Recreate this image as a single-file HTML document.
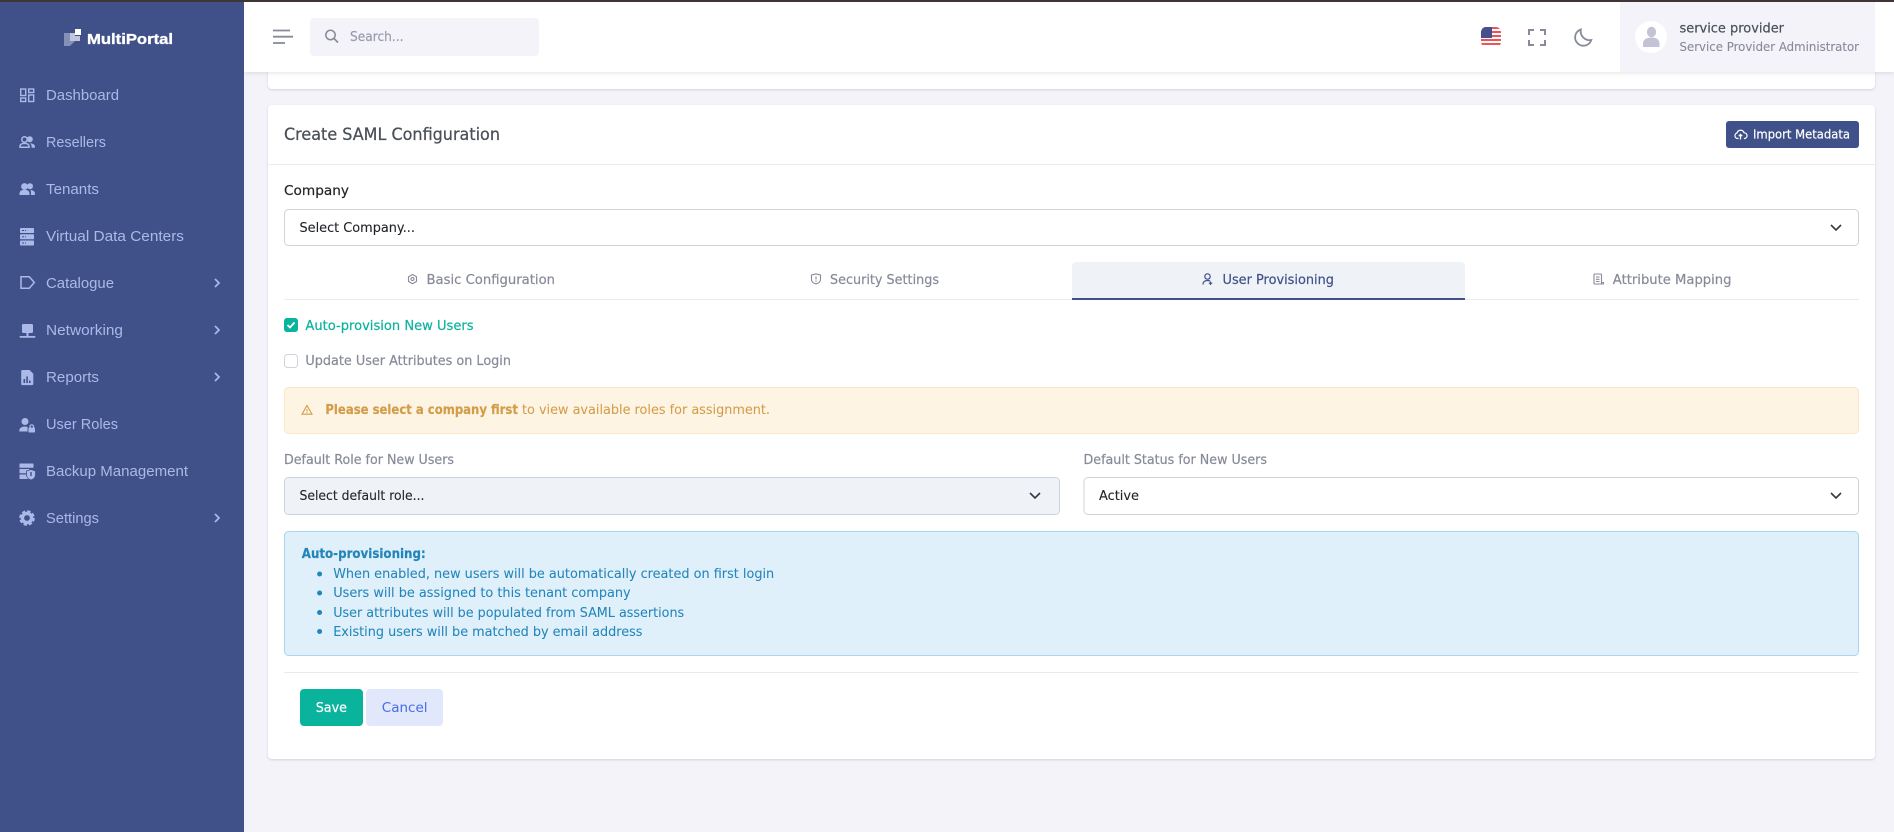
<!DOCTYPE html>
<html lang="en">
<head>
<meta charset="utf-8">
<title>Create SAML Configuration</title>
<style>
html,body{margin:0;padding:0;width:1894px;height:832px;overflow:hidden;background:#f3f3f9}
svg{display:block}
text{font-family:"DejaVu Sans","Liberation Sans",sans-serif;font-size:13px;white-space:pre;stroke-width:.2px}
.nav{font-family:"Liberation Sans",sans-serif;font-size:15px;fill:#abb9e8;stroke-width:0}
.ic{fill:#abb9e8}
.ol{fill:none;stroke:#abb9e8;stroke-width:1.5}
.g{fill:#878a99;stroke:#878a99}
.d{fill:#212529;stroke:#212529}
.h{fill:#495057;stroke:#495057}
.p{fill:#405189;stroke:#405189}
.t{fill:#0ab39c;stroke:#0ab39c}
.w{fill:#fff;stroke:#fff}
.y{fill:#d29d48;stroke:#d29d48}
.b{fill:#2385ba;stroke:#2385ba}
.m{fill:#9a9cab;stroke:#9a9cab}
.u{fill:#4b6fe6;stroke:#4b6fe6}
</style>
</head>
<body>
<svg xmlns="http://www.w3.org/2000/svg" width="1894" height="832" viewBox="0 0 1894 832">
<defs>
<clipPath id="fc"><rect x="1481" y="27" width="20" height="20" rx="5"/></clipPath>
</defs>
<rect width="1894" height="832" fill="#f3f3f9"/>

<!-- cards -->
<rect x="268" y="40" width="1607" height="49" rx="4" fill="#fff" style="filter:drop-shadow(0 1px 1px rgba(56,65,74,.18))"/>
<rect x="268" y="105" width="1607" height="654" rx="4" fill="#fff" style="filter:drop-shadow(0 1px 1px rgba(56,65,74,.18))"/>

<!-- header -->
<rect x="244" y="2" width="1650" height="70" fill="#fff" style="filter:drop-shadow(0 1px 2px rgba(56,65,74,.15))"/>
<rect x="1620" y="2" width="255" height="70" fill="#f3f3f9"/>
<rect width="1894" height="2" fill="#3f3536"/>

<!-- sidebar -->
<rect y="2" width="244" height="830" fill="#405189"/>
<path fill="#8590b8" d="M64 33h6v8h5l-5 5h-6z"/>
<path fill="#c0c6dc" d="M70 33h5v-0h0v3h5v5h-10z"/>
<rect x="75" y="29" width="6" height="6" fill="#fff"/>
<text x="87" y="44" textLength="86" lengthAdjust="spacingAndGlyphs" style="font-family:'Liberation Sans',sans-serif;font-size:15px;font-weight:700;stroke-width:.35px" class="w">MultiPortal</text>

<!-- nav -->
<text class="nav" x="46" y="100" textLength="73" lengthAdjust="spacingAndGlyphs">Dashboard</text>
<text class="nav" x="46" y="147" textLength="60" lengthAdjust="spacingAndGlyphs">Resellers</text>
<text class="nav" x="46" y="194" textLength="53" lengthAdjust="spacingAndGlyphs">Tenants</text>
<text class="nav" x="46" y="241" textLength="138" lengthAdjust="spacingAndGlyphs">Virtual Data Centers</text>
<text class="nav" x="46" y="288" textLength="68" lengthAdjust="spacingAndGlyphs">Catalogue</text>
<text class="nav" x="46" y="335" textLength="77" lengthAdjust="spacingAndGlyphs">Networking</text>
<text class="nav" x="46" y="382" textLength="53" lengthAdjust="spacingAndGlyphs">Reports</text>
<text class="nav" x="46" y="429" textLength="72" lengthAdjust="spacingAndGlyphs">User Roles</text>
<text class="nav" x="46" y="476" textLength="142" lengthAdjust="spacingAndGlyphs">Backup Management</text>
<text class="nav" x="46" y="523" textLength="53" lengthAdjust="spacingAndGlyphs">Settings</text>

<!-- nav icons -->
<g class="ol" style="stroke-width:1.4">
<rect x="20.700" y="89" width="5" height="6.500"/><rect x="28.700" y="89" width="5" height="3.500"/>
<rect x="20.700" y="98" width="5" height="3.500"/><rect x="28.700" y="95" width="5" height="6.500"/>
</g>
<!-- resellers -->
<circle cx="24.500" cy="139.500" r="2.700" class="ol"/>
<path class="ol" d="M20 147.200v-.9c0-1.900 2-2.900 4.500-2.900s4.500 1 4.500 2.900v.9z"/>
<circle cx="29.800" cy="139.300" r="3" class="ic"/>
<path class="ic" d="M30 143.300c2.700.2 4.900 1.300 4.900 3v1.500h-3.300v-1.500c0-1.100-.6-2.100-1.600-3z"/>
<!-- tenants -->
<circle cx="24.500" cy="186.500" r="3.400" class="ic"/>
<circle cx="30" cy="186.300" r="3" class="ic"/>
<path class="ic" d="M19.500 195v-1.700c0-2.300 2.300-3.500 5-3.500s5 1.200 5 3.500v1.700z"/>
<path class="ic" d="M30.500 190c2.400.2 4.400 1.300 4.400 3.100V195h-3.900v-1.800c0-1.200-.1-2.300-.5-3.200z"/>
<!-- server -->
<rect x="20" y="228" width="14" height="5" rx=".8" class="ic"/><rect x="20" y="234.300" width="14" height="5" rx=".8" class="ic"/><rect x="20" y="240.500" width="14" height="5" rx=".8" class="ic"/>
<g fill="#405189"><rect x="22" y="230" width="2" height="1"/><rect x="25" y="230" width="1" height="1"/><rect x="22" y="236.300" width="2" height="1"/><rect x="25" y="236.300" width="1" height="1"/><rect x="22" y="242.500" width="2" height="1"/><rect x="25" y="242.500" width="1" height="1"/></g>
<!-- catalogue -->
<path class="ol" d="M21 276.800h8.300l5 5.700-5 5.700H21z"/>
<!-- networking -->
<rect x="22" y="324" width="11" height="9" rx="1.200" class="ic"/>
<rect x="26.500" y="333" width="2" height="3.500" class="ic"/>
<rect x="19.500" y="336" width="16" height="1.800" rx=".9" class="ic"/>
<!-- reports -->
<path class="ic" d="M22.500 370h7l3.800 3.800v10a1.300 1.300 0 0 1-1.300 1.300h-9.500a1.300 1.300 0 0 1-1.300-1.300v-12.500a1.300 1.300 0 0 1 1.300-1.300z"/>
<g fill="#405189"><rect x="23.500" y="379" width="1.600" height="4"/><rect x="26.300" y="376.500" width="1.600" height="6.500"/><rect x="29" y="380.500" width="1.600" height="2.500"/></g>
<!-- user roles -->
<circle cx="25" cy="421.500" r="3.500" class="ic"/>
<path class="ic" d="M19.300 431.500v-1c0-2.400 2.500-4 5.500-4 1 0 2 .2 2.800.5v4.500z"/>
<rect x="28.500" y="427.500" width="6.500" height="5" rx=".8" class="ic"/>
<path class="ol" style="stroke-width:1.200" d="M30 427.500v-1.300a1.800 1.800 0 0 1 3.500 0v1.300"/>
<!-- backup -->
<rect x="19.500" y="463.500" width="14" height="4.300" rx=".6" class="ic"/>
<rect x="19.500" y="469" width="10" height="4.300" rx=".6" class="ic"/>
<rect x="19.500" y="474.500" width="9" height="4.500" rx=".6" class="ic"/>
<path class="ic" d="M31 469.500l4.500 1.500v3.800c0 2.600-2 4.500-4.500 5.200-2.500-.7-4.500-2.600-4.500-5.200V471z" stroke="#405189" stroke-width=".8"/>
<rect x="30.300" y="472" width="1.400" height="4" fill="#405189"/>
<!-- settings -->
<circle cx="27" cy="518" r="4.600" fill="none" stroke="#abb9e8" stroke-width="3.400"/>
<circle cx="27" cy="518" r="6.900" fill="none" stroke="#abb9e8" stroke-width="1.800" stroke-dasharray="3.400 2.020"/>
<!-- chevrons -->
<g fill="none" stroke="#abb9e8" stroke-width="1.700">
<polyline points="215,279 219,283 215,287"/>
<polyline points="215,326 219,330 215,334"/>
<polyline points="215,373 219,377 215,381"/>
<polyline points="215,514 219,518 215,522"/>
</g>

<!-- hamburger -->
<g stroke="#878a99" stroke-width="1.800">
<line x1="273" x2="290" y1="30.500" y2="30.500"/>
<line x1="273" x2="293" y1="36.700" y2="36.700"/>
<line x1="273" x2="285" y1="43" y2="43"/>
</g>
<!-- search -->
<rect x="310" y="18" width="229" height="38" rx="4" fill="#f3f3f9"/>
<circle cx="330.500" cy="35" r="4.700" fill="none" stroke="#878a99" stroke-width="1.500"/>
<line x1="334" y1="38.500" x2="338" y2="42.500" stroke="#878a99" stroke-width="1.700"/>
<text x="350" y="41" textLength="53.500" lengthAdjust="spacingAndGlyphs" class="m">Search...</text>

<!-- flag -->
<g clip-path="url(#fc)">
<rect x="1481" y="27" width="20" height="20" fill="#fff"/>
<g fill="#f0525a">
<rect x="1481" y="27" width="20" height="2"/><rect x="1481" y="31" width="20" height="2"/><rect x="1481" y="35" width="20" height="2"/><rect x="1481" y="39" width="20" height="2"/><rect x="1481" y="43" width="20" height="2"/>
</g>
<rect x="1481" y="27" width="11" height="11" fill="#46508f"/>
</g>
<!-- fullscreen -->
<path fill="none" stroke="#878a99" stroke-width="2" d="M1529 35v-5h5M1540 30h5v5M1545 40v5h-5M1534 45h-5v-5"/>
<!-- moon -->
<path fill="none" stroke="#878a99" stroke-width="1.800" d="M1580.800 29.500A8.300 8.300 0 1 0 1591.300 40A9 9 0 0 1 1580.800 29.500Z"/>

<!-- user -->
<circle cx="1651" cy="37" r="16" fill="#fff"/>
<ellipse cx="1651.500" cy="32" rx="4.600" ry="5.200" fill="#c3c2d6"/>
<path fill="#c3c2d6" d="M1643 47v-3.500c0-4 3.500-6 8.500-6s8 2 8 6V47z"/>
<text x="1679.500" y="32.500" textLength="104.500" lengthAdjust="spacingAndGlyphs" class="h" style="font-size:13.500px">service provider</text>
<text x="1679.500" y="51" textLength="179.500" lengthAdjust="spacingAndGlyphs" class="g" style="font-size:12.500px;stroke-width:.1px">Service Provider Administrator</text>

<!-- card header -->
<text x="284" y="140" textLength="216" lengthAdjust="spacingAndGlyphs" class="h" style="font-size:16.500px;stroke-width:.25px">Create SAML Configuration</text>
<line x1="268" x2="1875" y1="164.500" y2="164.500" stroke="#e9ebec"/>
<rect x="1726" y="121" width="133" height="27" rx="3" fill="#405189"/>
<path fill="none" stroke="#fff" stroke-width="1.200" d="M1738.500 138.500h-.8a2.800 2.800 0 0 1-.7-5.500 3.700 3.700 0 0 1 7.100-.2 2.900 2.900 0 0 1 .8 5.700h-1"/>
<path fill="none" stroke="#fff" stroke-width="1.200" d="M1740.500 139.500v-5M1738.700 136.200l1.800-1.800 1.800 1.800"/>
<text x="1753" y="138.500" textLength="97" lengthAdjust="spacingAndGlyphs" class="w" style="font-size:12px">Import Metadata</text>

<!-- company -->
<text x="284" y="195" textLength="65" lengthAdjust="spacingAndGlyphs" class="d">Company</text>
<rect x="284.500" y="209.500" width="1574" height="36" rx="4" fill="#fff" stroke="#ced4da"/>
<text x="299.500" y="232" textLength="115.500" lengthAdjust="spacingAndGlyphs" class="d" style="stroke-width:.1px">Select Company...</text>
<polyline points="1831,225 1836,230 1841,225" fill="none" stroke="#343a40" stroke-width="1.600"/>

<!-- tabs -->
<line x1="284" x2="1859" y1="299.500" y2="299.500" stroke="#e9ebec"/>
<path d="M1072 266a4 4 0 0 1 4-4h385a4 4 0 0 1 4 4v34h-393z" fill="#eff2f7"/>
<rect x="1072" y="298" width="393" height="2" fill="#405189"/>

<g fill="none" stroke="#878a99" stroke-width="1.100">
<path d="M412.500 274.500l4 2.300v4.600l-4 2.300-4-2.300v-4.600z"/><circle cx="412.500" cy="279" r="1.500"/>
<path d="M811.500 275l4.500-1 4.500 1v4.500c0 2.300-2 3.800-4.500 4.500-2.500-.7-4.500-2.200-4.500-4.500z"/><path d="M816 276.500v3M816 280.500v1.200"/>
<rect x="1594" y="274" width="7.500" height="10" rx=".8"/><path d="M1596 277h3.500M1596 279.300h3.500M1596 281.500h3.500M1601.500 282.500h2v1.500h-2"/>
</g>
<g fill="none" stroke="#405189" stroke-width="1.200">
<circle cx="1207.500" cy="276.500" r="2.700"/><path d="M1203 284.500c0-2.700 2-4 4.500-4 1 0 1.900.2 2.600.6"/><path d="M1210.500 281.500v3.500M1208.800 283.200h3.500"/>
</g>
<text class="g" x="426.500" y="284" textLength="128.500" lengthAdjust="spacingAndGlyphs">Basic Configuration</text>
<text class="g" x="830" y="284" textLength="109" lengthAdjust="spacingAndGlyphs">Security Settings</text>
<text class="p" x="1222.500" y="284" textLength="111.500" lengthAdjust="spacingAndGlyphs">User Provisioning</text>
<text class="g" x="1612.800" y="284" textLength="118.700" lengthAdjust="spacingAndGlyphs">Attribute Mapping</text>

<!-- checks -->
<rect x="284" y="318" width="14" height="14" rx="3" fill="#0ab39c"/>
<polyline points="287.500,325 290,327.500 294.500,322.500" fill="none" stroke="#fff" stroke-width="1.800"/>
<text x="305.400" y="330" textLength="168.200" lengthAdjust="spacingAndGlyphs" class="t">Auto-provision New Users</text>
<rect x="284.500" y="354.500" width="13" height="13" rx="3" fill="#fff" stroke="#ced4da"/>
<text x="305.400" y="365" textLength="205.600" lengthAdjust="spacingAndGlyphs" class="g">Update User Attributes on Login</text>

<!-- warning alert -->
<rect x="284.500" y="387.500" width="1574" height="46" rx="4" fill="#fef4e4" stroke="#fbe7c4"/>
<path fill="none" stroke="#d29d48" stroke-width="1.100" d="M307 405.500l5 8.700h-10zM307 409v2.500M307 412.300v.8"/>
<text x="325.400" y="414" textLength="192.500" lengthAdjust="spacingAndGlyphs" class="y" style="font-weight:700">Please select a company first</text>
<text x="522" y="414" textLength="248" lengthAdjust="spacingAndGlyphs" class="y" style="stroke-width:.05px">to view available roles for assignment.</text>

<!-- selects -->
<text x="284" y="464" textLength="170" lengthAdjust="spacingAndGlyphs" class="g">Default Role for New Users</text>
<text x="1083.500" y="464" textLength="183.500" lengthAdjust="spacingAndGlyphs" class="g">Default Status for New Users</text>
<rect x="284.500" y="477.500" width="775" height="37" rx="4" fill="#eff2f7" stroke="#ced4da"/>
<text x="299.500" y="500" textLength="125" lengthAdjust="spacingAndGlyphs" class="d" style="stroke-width:.1px">Select default role...</text>
<polyline points="1030,493 1035,498 1040,493" fill="none" stroke="#343a40" stroke-width="1.600"/>
<rect x="1084" y="477.500" width="774.500" height="37" rx="4" fill="#fff" stroke="#ced4da"/>
<text x="1099" y="500" textLength="40" lengthAdjust="spacingAndGlyphs" class="d" style="stroke-width:.1px">Active</text>
<polyline points="1831,493 1836,498 1841,493" fill="none" stroke="#343a40" stroke-width="1.600"/>

<!-- info alert -->
<rect x="284.500" y="531.500" width="1574" height="124" rx="4" fill="#dff0fa" stroke="#a9d6ef"/>
<text x="301.800" y="558" textLength="123.900" lengthAdjust="spacingAndGlyphs" class="b" style="font-weight:700">Auto-provisioning:</text>
<g fill="#2385ba">
<circle cx="319.600" cy="574" r="2.500"/><circle cx="319.600" cy="593" r="2.500"/><circle cx="319.600" cy="612.500" r="2.500"/><circle cx="319.600" cy="631.500" r="2.500"/>
</g>
<text x="333.200" y="578" textLength="441" lengthAdjust="spacingAndGlyphs" class="b" style="stroke-width:.05px">When enabled, new users will be automatically created on first login</text>
<text x="333.200" y="597" textLength="297.500" lengthAdjust="spacingAndGlyphs" class="b" style="stroke-width:.05px">Users will be assigned to this tenant company</text>
<text x="333.200" y="617" textLength="351" lengthAdjust="spacingAndGlyphs" class="b" style="stroke-width:.05px">User attributes will be populated from SAML assertions</text>
<text x="333.200" y="636" textLength="309.300" lengthAdjust="spacingAndGlyphs" class="b" style="stroke-width:.05px">Existing users will be matched by email address</text>

<line x1="284" x2="1859" y1="672.500" y2="672.500" stroke="#e9ebec"/>

<!-- buttons -->
<rect x="300" y="689" width="63" height="37" rx="4" fill="#0ab39c"/>
<text x="315.700" y="712" textLength="31.300" lengthAdjust="spacingAndGlyphs" class="w">Save</text>
<rect x="366" y="689" width="77" height="37" rx="4" fill="#e2e8fb"/>
<text x="381.800" y="712" textLength="45.700" lengthAdjust="spacingAndGlyphs" class="u" style="stroke-width:.05px">Cancel</text>
</svg>
</body>
</html>
